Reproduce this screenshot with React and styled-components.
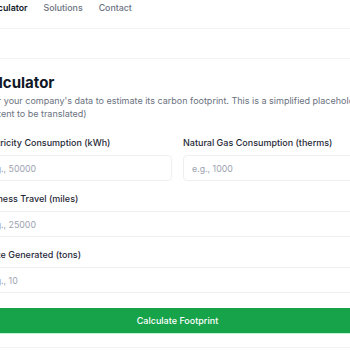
import styled, { createGlobalStyle } from "styled-components";

const GlobalStyle = createGlobalStyle`
  html, body {
    margin: 0;
    padding: 0;
    background: #ffffff;
    overflow: hidden;
  }
  body {
    font-family: Inter, "Noto Sans", "Liberation Sans", sans-serif;
    color: #111827;
  }
`;

const Page = styled.div`
  width: 350px;
  height: 350px;
  overflow: hidden;
`;

const Header = styled.header`
  margin-top: -12px;
  height: 40px;
  border-bottom: 1px solid #f3f4f6;
  display: flex;
  align-items: center;
`;

const Inner = styled.div`
  width: 397px;
  margin-left: -21px;
  flex-shrink: 0;
`;

const NavItems = styled.nav`
  display: flex;
  align-items: center;
  gap: 16px;
  padding-left: 5px;
`;

const NavLink = styled.a`
  font-size: 8.8px;
  line-height: 12px;
  text-decoration: none;
  font-weight: ${({ $active }) => ($active ? 600 : 500)};
  color: ${({ $active }) => ($active ? "#111827" : "#6b7280")};
`;

const Main = styled.main`
  padding-top: 29px;
`;

const Card = styled.section`
  border-top: 1px solid #f3f4f6;
  border-bottom: 1px solid #f3f4f6;
  padding: 14px 0;
  display: flex;
  justify-content: flex-start;
`;

const Title = styled.h1`
  margin: 0;
  font-size: 15px;
  line-height: 20px;
  font-weight: 700;
  color: #111827;
`;

const Description = styled.p`
  margin: 1px 0 0;
  font-size: 9px;
  line-height: 13px;
  color: #6b7280;
`;

const Form = styled.form`
  margin-top: 17px;
  display: grid;
  grid-template-columns: 1fr 1fr;
  column-gap: 11px;
  row-gap: 12px;
`;

const Field = styled.div`
  display: flex;
  flex-direction: column;
  grid-column: ${({ $wide }) => ($wide ? "1 / -1" : "auto")};
`;

const Label = styled.label`
  font-size: 9px;
  line-height: 12px;
  font-weight: 500;
  color: #1f2937;
  margin-bottom: 6px;
`;

const Input = styled.input`
  box-sizing: border-box;
  height: 26px;
  width: 100%;
  padding: 0 8px;
  border: 1px solid #eeeff1;
  border-radius: 4px;
  background: #ffffff;
  font-family: inherit;
  font-size: 8.8px;
  color: #111827;
  outline: none;
  &::placeholder {
    color: #9ca3af;
  }
`;

const SubmitButton = styled.button`
  grid-column: 1 / -1;
  margin-top: 3px;
  height: 25px;
  border: none;
  border-radius: 3px;
  background: #16a34a;
  color: #ffffff;
  font-family: inherit;
  font-size: 9px;
  font-weight: 500;
  box-shadow: 0 1px 0 #bbf7d0;
  cursor: pointer;
`;

const fields = [
  { id: "electricity", label: "Electricity Consumption (kWh)", placeholder: "e.g., 50000" },
  { id: "gas", label: "Natural Gas Consumption (therms)", placeholder: "e.g., 1000" },
  { id: "travel", label: "Business Travel (miles)", placeholder: "e.g., 25000", wide: true },
  { id: "waste", label: "Waste Generated (tons)", placeholder: "e.g., 10", wide: true },
];

export default function App() {
  return (
    <Page>
      <GlobalStyle />
      <Header>
        <Inner>
          <NavItems>
            <NavLink href="#calculator" $active>Calculator</NavLink>
            <NavLink href="#solutions">Solutions</NavLink>
            <NavLink href="#contact">Contact</NavLink>
          </NavItems>
        </Inner>
      </Header>
      <Main>
        <Card>
          <Inner>
            <Title>Calculator</Title>
            <Description>
              Enter your company's data to estimate its carbon footprint. This is a simplified placeholder (content to be translated)
            </Description>
            <Form onSubmit={(e) => e.preventDefault()}>
              {fields.map((f) => (
                <Field key={f.id} $wide={f.wide}>
                  <Label htmlFor={f.id}>{f.label}</Label>
                  <Input id={f.id} type="number" placeholder={f.placeholder} />
                </Field>
              ))}
              <SubmitButton type="submit">Calculate Footprint</SubmitButton>
            </Form>
          </Inner>
        </Card>
      </Main>
    </Page>
  );
}
